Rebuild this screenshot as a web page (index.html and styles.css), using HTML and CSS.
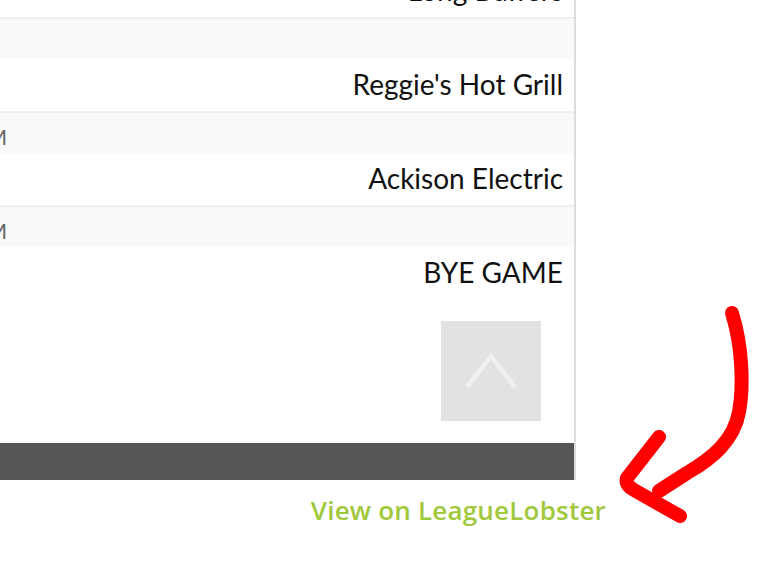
FILE: index.html
```html
<!DOCTYPE html>
<html lang="en">
<head>
	<meta charset="UTF-8">
	<title>Schedule</title>
	<link rel="stylesheet" href="styles.css">
</head>
<body>
	<div class="schedule">
		<div class="game">
			<div class="when">Thu, Jun 14 - 6:30 PM</div>
			<div class="team">Long Buffers</div>
		</div>
		<div class="game">
			<div class="when">Thu, Jun 14 - 9:00 PM</div>
			<div class="team">Reggie's Hot Grill</div>
		</div>
		<div class="game">
			<div class="when">Thu, Jun 21 - 10:00 PM</div>
			<div class="team">Ackison Electric</div>
		</div>
		<div class="game last">
			<div class="when">Thu, Jun 28 - 10:00 PM</div>
			<div class="team">BYE GAME</div>
		</div>
		<div class="totop-row">
			<a class="totop" href="#">
				<svg width="100" height="100" viewBox="0 0 100 100">
					<polyline points="26,66 50,35 74,66" fill="none" stroke="#f0f0f0" stroke-width="4.5"/>
				</svg>
			</a>
		</div>
		<div class="bar"></div>
	</div>
	<div class="credit"><a href="#">View on LeagueLobster</a></div>

	<!-- hand drawn arrow pointing at the link -->
	<svg class="scribble" width="774" height="570" viewBox="0 0 774 570">
		<g fill="none" stroke="#ff0000" stroke-width="14" stroke-linecap="round" stroke-linejoin="round">
			<path d="M732 313 C742 345 744 385 739 412 C734 440 713 458 687 473 L659 491"/>
			<path d="M659 437 L627 478 Q625 485 634 490 L680 516"/>
		</g>
	</svg>
</body>
</html>
```

FILE: styles.css
```css
*{
	margin: 0;
	padding: 0;
	box-sizing: border-box;
}
body{
	background: #fff;
	overflow: hidden;
	position: relative;
	font-family: Lato, "Liberation Sans", sans-serif;
}
.schedule{
	width: 816px;
	margin-left: -240px;
	margin-top: -75px;
	border-right: 2px solid #dcdcdc;
}
.game{
	border-bottom: 2px solid #eeeeee;
}
.game.last{
	border-bottom: none;
}
.when{
	height: 40px;
	background: #f8f9f9;
	color: #666;
	font-size: 22px;
	line-height: 26px;
	padding: 11px 0 0 20px;
	white-space: nowrap;
}
.team{
	height: 52px;
	padding: 0 11px 2px 0;
	font-size: 28px;
	line-height: 50px;
	text-align: right;
	color: #111;
}
.totop-row{
	display: flex;
	justify-content: flex-end;
	padding: 22px 33px 22px 0;
}
.totop{
	display: block;
	width: 100px;
	height: 100px;
	background: #e2e2e2;
}
.totop svg{
	display: block;
}
.bar{
	height: 37px;
	background: #555;
}
.credit{
	text-align: right;
	padding: 12px 168px 0 0;
}
.credit a{
	font-family: "Open Sans", sans-serif;
	font-weight: 600;
	font-size: 26px;
	letter-spacing: 0.2px;
	color: #a0c83a;
	text-decoration: none;
}
.scribble{
	position: absolute;
	left: 0;
	top: 0;
	pointer-events: none;
}
```
